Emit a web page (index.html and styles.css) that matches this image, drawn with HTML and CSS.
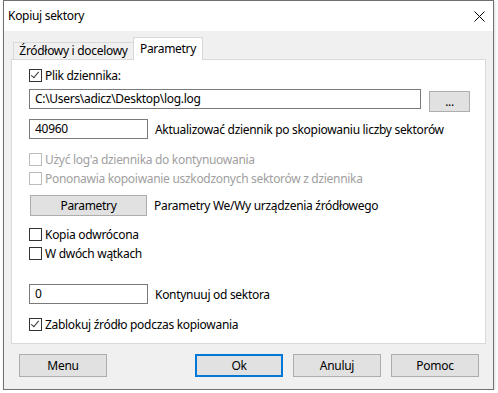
FILE: index.html
```html
<!DOCTYPE html>
<html lang="pl">
<head>
    <meta charset="UTF-8">
    <title>Kopiuj sektory</title>
    <link rel="stylesheet" href="styles.css">
</head>
<body>
    <div class="window">
        <div class="titlebar">
            <span class="title">Kopiuj sektory</span>
            <svg class="close" width="11" height="11" viewBox="0 0 11 11">
                <path d="M0.5 0.5 L10.5 10.5 M10.5 0.5 L0.5 10.5" stroke="#000" stroke-width="1"/>
            </svg>
        </div>

        <div class="client">
            <div class="tabs">
                <div class="tab">Źródłowy i docelowy</div>
                <div class="tab active">Parametry</div>
            </div>

            <div class="panel">
                <div class="check-row first">
                    <span class="checkbox checked"></span>
                    <span class="check-label">Plik dziennika:</span>
                </div>

                <div class="field-row path-row">
                    <div class="input path-input">C:\Users\adicz\Desktop\log.log</div>
                    <button class="btn browse-btn">...</button>
                </div>

                <div class="field-row count-row">
                    <div class="input short-input">40960</div>
                    <span class="field-label">Aktualizować dziennik po skopiowaniu liczby sektorów</span>
                </div>

                <div class="check-row disabled resume-row">
                    <span class="checkbox"></span>
                    <span class="check-label">Użyć log'a dziennika do kontynuowania</span>
                </div>

                <div class="check-row disabled retry-row">
                    <span class="checkbox"></span>
                    <span class="check-label">Pononawia kopoiwanie uszkodzonych sektorów z dziennika</span>
                </div>

                <div class="field-row params-row">
                    <button class="btn params-btn">Parametry</button>
                    <span class="field-label">Parametry We/Wy urządzenia źródłowego</span>
                </div>

                <div class="check-row reverse-row">
                    <span class="checkbox"></span>
                    <span class="check-label">Kopia odwrócona</span>
                </div>

                <div class="check-row threads-row">
                    <span class="checkbox"></span>
                    <span class="check-label">W dwóch wątkach</span>
                </div>

                <div class="field-row start-row">
                    <div class="input short-input">0</div>
                    <span class="field-label">Kontynuuj od sektora</span>
                </div>

                <div class="check-row lock-row">
                    <span class="checkbox checked"></span>
                    <span class="check-label">Zablokuj źródło podczas kopiowania</span>
                </div>
            </div>

            <div class="buttons">
                <button class="btn dlg-btn">Menu</button>
                <div class="spacer"></div>
                <button class="btn dlg-btn default">Ok</button>
                <button class="btn dlg-btn">Anuluj</button>
                <button class="btn dlg-btn">Pomoc</button>
            </div>
        </div>
    </div>
</body>
</html>
```

FILE: styles.css
```css
body {
    margin: 0;
    padding: 0;
    background: #fff;
    font-family: "Segoe UI", "Noto Sans", sans-serif;
    font-size: 12px;
    letter-spacing: -0.3px;
    color: #000;
}

.window {
    margin-left: 3px;
    width: 491px;
    height: 390px;
    box-sizing: border-box;
    border: 1px solid #707070;
    box-shadow: 1px 1px 3px rgba(0,0,0,0.15);
    display: flex;
    flex-direction: column;
    background: #f0f0f0;
}

.titlebar {
    height: 30px;
    background: #fff;
    display: flex;
    align-items: center;
    padding: 0 0 0 4px;
    flex-shrink: 0;
}

.title {
    flex: 1;
    margin-top: -1px;
}

.close {
    margin-right: 8px;
    margin-top: 0px;
}

.client {
    flex: 1;
    display: flex;
    flex-direction: column;
    padding-top: 6px;
}

.tabs {
    display: flex;
    align-items: flex-end;
    height: 22px;
    margin-left: 9px;
    position: relative;
    z-index: 1;
}

.tab {
    box-sizing: border-box;
    width: 121px;
    height: 17px;
    border: 1px solid #d9d9d9;
    border-bottom: none;
    background: #f0f0f0;
    text-align: center;
    line-height: 16px;
}

.tab.active {
    width: 70px;
    height: 23px;
    margin-left: -1px;
    margin-bottom: -1px;
    background: #fff;
    line-height: 21px;
}

.panel {
    box-sizing: border-box;
    height: 285px;
    margin: 0 7px;
    border: 1px solid #d9d9d9;
    background: #fff;
    padding: 0 0 0 17px;
    display: flex;
    flex-direction: column;
}

.check-row {
    display: flex;
    align-items: center;
    height: 13px;
}

.checkbox {
    box-sizing: border-box;
    width: 13px;
    height: 13px;
    border: 1px solid #333;
    background: #fff;
    flex-shrink: 0;
    position: relative;
}

.checkbox.checked::after {
    content: "";
    position: absolute;
    left: 3px;
    top: 0px;
    width: 3px;
    height: 7px;
    border-right: 1px solid #333;
    border-bottom: 1px solid #333;
    transform: rotate(40deg);
}

.check-label {
    margin-left: 3px;
    white-space: nowrap;
}

.disabled .checkbox {
    border-color: #bcbcbc;
}

.disabled .check-label {
    color: #a0a0a0;
}

.field-row {
    display: flex;
    align-items: center;
}

.input {
    box-sizing: border-box;
    height: 20px;
    border: 1px solid #7a7a7a;
    background: #fff;
    padding-left: 5px;
    line-height: 18px;
    white-space: nowrap;
}

.path-input {
    width: 392px;
}

.short-input {
    width: 119px;
}

.field-label {
    margin-left: 7px;
    white-space: nowrap;
}

.btn {
    box-sizing: border-box;
    font: inherit;
    letter-spacing: inherit;
    color: #000;
    background: #e1e1e1;
    border: 1px solid #adadad;
    padding: 0;
    margin: 0;
}

.browse-btn {
    width: 41px;
    height: 21px;
    margin-left: 8px;
    margin-top: 2px;
    line-height: 19px;
}

.params-btn {
    width: 117px;
    height: 21px;
    margin-left: 1px;
}

.first { margin-top: 9px; }
.path-row { margin-top: 7px; align-items: flex-start; height: 21px; }
.count-row { margin-top: 9px; }
.resume-row { margin-top: 14px; }
.retry-row { margin-top: 6px; }
.params-row { margin-top: 10px; }
.reverse-row { margin-top: 12px; }
.threads-row { margin-top: 6px; }
.start-row { margin-top: 24px; }
.lock-row { margin-top: 14px; }

.buttons {
    display: flex;
    gap: 10px;
    margin-top: 10px;
    padding: 0 14px 0 15px;
}

.spacer {
    flex: 1;
}

.dlg-btn {
    width: 88px;
    height: 23px;
}

.dlg-btn.default {
    border: 2px solid #0078d7;
}
```
